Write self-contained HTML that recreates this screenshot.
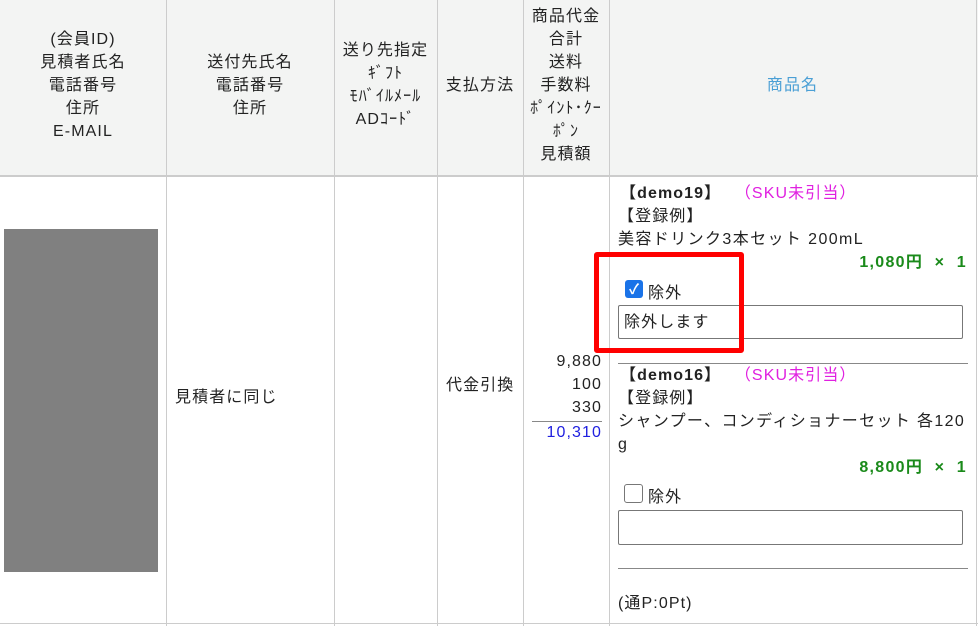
<!DOCTYPE html>
<html><head><meta charset="utf-8"><style>
body{margin:0;width:978px;height:626px;background:#fff;position:relative;overflow:hidden;font-family:"Liberation Sans","Noto Sans CJK JP",sans-serif;font-size:16px;color:#222;letter-spacing:1.1px;}
.a{position:absolute;white-space:nowrap;line-height:23px;}
.c{text-align:center;}
.v{position:absolute;top:0;width:1px;height:626px;background:#ccc;}
.h{position:absolute;height:1px;background:#ccc;}
</style></head><body>
<div style="position:absolute;left:0;top:0;width:978px;height:175px;background:#f3f4f3"></div>
<div class="h" style="left:0;top:175px;width:978px;height:2px"></div>
<div class="h" style="left:0;top:623px;width:978px"></div>
<div class="v" style="left:166px"></div>
<div class="v" style="left:334px"></div>
<div class="v" style="left:437px"></div>
<div class="v" style="left:523px"></div>
<div class="v" style="left:609px"></div>
<div class="v" style="left:976px"></div>

<div class="a c" style="left:0;width:166px;top:28px">(会員ID)<br>見積者氏名<br>電話番号<br>住所<br>E-MAIL</div>
<div class="a c" style="left:166px;width:168px;top:51px">送付先氏名<br>電話番号<br>住所</div>
<div class="a c" style="left:334px;width:103px;top:39px">送り先指定<br>ｷﾞﾌﾄ<br>ﾓﾊﾞｲﾙﾒｰﾙ<br>ADｺｰﾄﾞ</div>
<div class="a c" style="left:437px;width:86px;top:74px">支払方法</div>
<div class="a c" style="left:523px;width:86px;top:5px">商品代金<br>合計<br>送料<br>手数料<br>ﾎﾟｲﾝﾄ･ｸｰ<br>ﾎﾟﾝ<br>見積額</div>
<div class="a c" style="left:609px;width:367px;top:74px;color:#4a9fd5">商品名</div>

<div style="position:absolute;left:4px;top:229px;width:154px;height:343px;background:#808080"></div>
<div class="a" style="left:175px;top:386px">見積者に同じ</div>
<div class="a" style="left:446px;top:374px">代金引換</div>
<div class="a" style="right:376px;top:350px;text-align:right">9,880<br>100<br>330</div>
<div class="h" style="left:532px;top:421px;width:70px;background:#888"></div>
<div class="a" style="right:376px;top:421px;color:#2020e0">10,310</div>

<div class="a" style="left:620px;top:182px"><b>【demo19】</b> <span style="color:#e020e0;margin-left:8px">（SKU未引当）</span></div>
<div class="a" style="left:618px;top:205px">【登録例】</div>
<div class="a" style="left:618px;top:228px;letter-spacing:1.4px">美容ドリンク3本セット 200mL</div>
<div class="a" style="right:11px;top:251px;color:#1a8a1a;font-weight:bold;letter-spacing:1.3px">1,080円&nbsp; × &nbsp;1</div>
<div style="position:absolute;left:625px;top:280px;width:18px;height:18px;background:#1a73e8;border-radius:3px;color:#fff;font-size:14px;line-height:18px;text-align:center;font-weight:bold;letter-spacing:0">✓</div>
<div class="a" style="left:648px;top:282px">除外</div>
<div style="position:absolute;left:618px;top:305px;width:343px;height:32px;border:1px solid #777;border-radius:2px"></div>
<div class="a" style="left:624px;top:311px">除外します</div>
<div style="position:absolute;left:594px;top:252px;width:140px;height:91px;border:5px solid #f00;border-radius:3px"></div>
<div class="h" style="left:618px;top:363px;width:350px;background:#888"></div>

<div class="a" style="left:620px;top:364px"><b>【demo16】</b> <span style="color:#e020e0;margin-left:8px">（SKU未引当）</span></div>
<div class="a" style="left:618px;top:387px">【登録例】</div>
<div class="a" style="left:618px;top:410px;letter-spacing:1.35px">シャンプー、コンディショナーセット 各120<br>g</div>
<div class="a" style="right:11px;top:456px;color:#1a8a1a;font-weight:bold;letter-spacing:1.3px">8,800円&nbsp; × &nbsp;1</div>
<div style="position:absolute;left:624px;top:484px;width:17px;height:17px;border:1px solid #777;border-radius:3px"></div>
<div class="a" style="left:648px;top:486px">除外</div>
<div style="position:absolute;left:618px;top:510px;width:343px;height:33px;border:1px solid #777;border-radius:2px"></div>
<div class="h" style="left:618px;top:568px;width:350px;background:#888"></div>
<div class="a" style="left:618px;top:592px">(通P:0Pt)</div>
</body></html>
